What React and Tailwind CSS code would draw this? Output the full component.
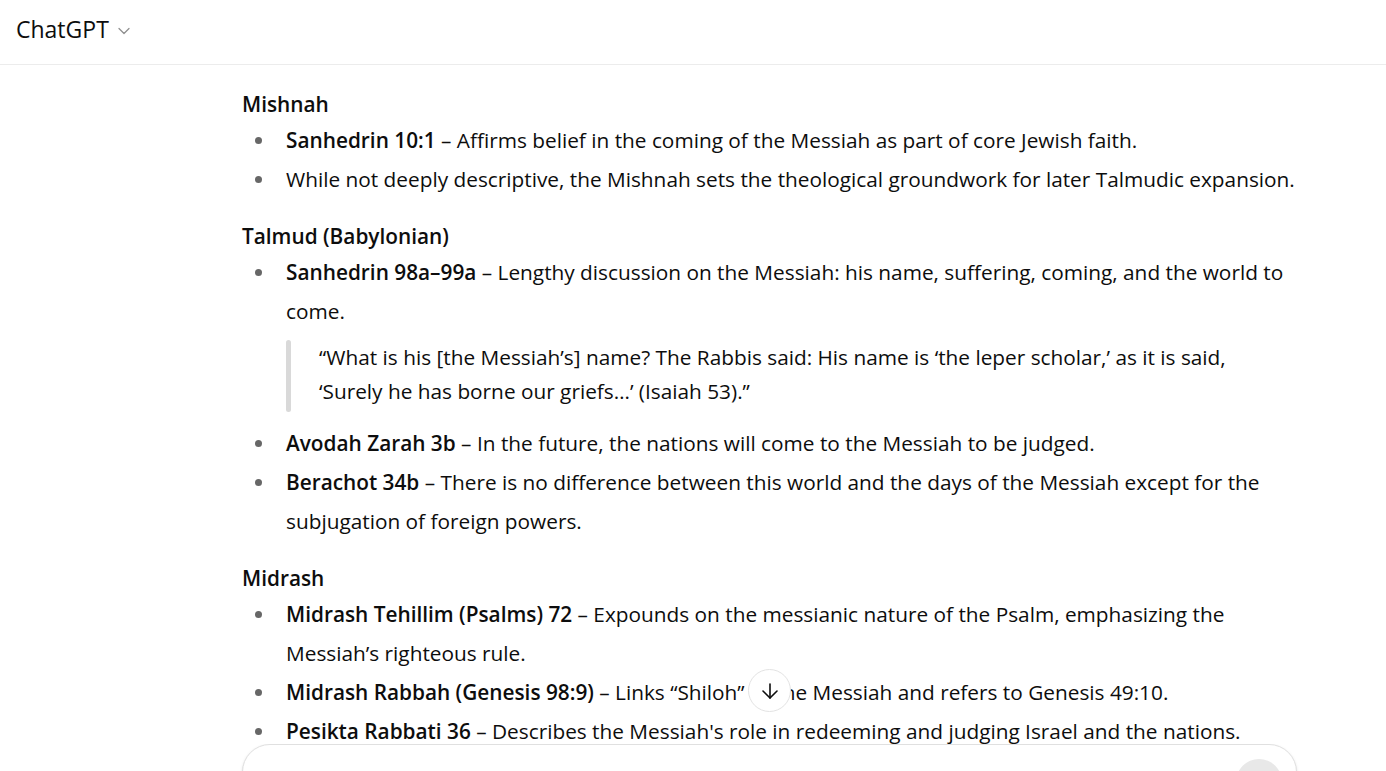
import React from 'react';
import { ChevronDown, ArrowDown } from 'lucide-react';

const sections = [
  {
    title: 'Mishnah',
    items: [
      { term: 'Sanhedrin 10:1', text: ' – Affirms belief in the coming of the Messiah as part of core Jewish faith.' },
      { text: 'While not deeply descriptive, the Mishnah sets the theological groundwork for later Talmudic expansion.' },
    ],
  },
  {
    title: 'Talmud (Babylonian)',
    items: [
      {
        term: 'Sanhedrin 98a–99a',
        text: ' – Lengthy discussion on the Messiah: his name, suffering, coming, and the world to come.',
        quote: [
          '“What is his [the Messiah’s] name? The Rabbis said: His name is ‘the leper scholar,’ as it is said,',
          '‘Surely he has borne our griefs…’ (Isaiah 53).”',
        ],
      },
      { term: 'Avodah Zarah 3b', text: ' – In the future, the nations will come to the Messiah to be judged.' },
      { term: 'Berachot 34b', text: ' – There is no difference between this world and the days of the Messiah except for the subjugation of foreign powers.' },
    ],
  },
  {
    title: 'Midrash',
    items: [
      { term: 'Midrash Tehillim (Psalms) 72', text: ' – Expounds on the messianic nature of the Psalm, emphasizing the Messiah’s righteous rule.' },
      { term: 'Midrash Rabbah (Genesis 98:9)', text: ' – Links “Shiloh” to the Messiah and refers to Genesis 49:10.' },
      { term: 'Pesikta Rabbati 36', text: " – Describes the Messiah's role in redeeming and judging Israel and the nations." },
    ],
  },
];

const Item = ({ item }) => (
  <li className="flex">
    <div className="w-[44px] shrink-0 h-[39px] flex items-center pl-[13px]">
      <span className="w-[7px] h-[7px] rounded-full bg-[#676767]" />
    </div>
    <div className="flex-1 min-w-0">
      <p className="leading-[39px]">
        {item.term && <strong className="font-semibold">{item.term}</strong>}
        {item.text}
      </p>
      {item.quote && (
        <blockquote className="mt-[8.5px] mb-[12px] flex">
          <div className="w-[5px] shrink-0 rounded-full bg-[#d9d9d9]" />
          <div className="pl-[28px] pb-1 leading-[34px]">
            {item.quote[0]}
            <br />
            {item.quote[1]}
          </div>
        </blockquote>
      )}
    </div>
  </li>
);

export default function App() {
  return (
    <div
      className="h-[771px] w-full overflow-hidden flex flex-col bg-white text-[#0d0d0d]"
      style={{ fontFamily: '"Open Sans", "Noto Sans", sans-serif' }}
    >
      <header className="h-[65px] shrink-0 border-b border-[#ececec] flex items-center px-4 pb-[5px] gap-[5px]">
        <span className="text-[23px] text-[#0d0d0d]">ChatGPT</span>
        <ChevronDown size={20} strokeWidth={1.5} className="text-[#8f8f8f] mt-[2px]" />
      </header>

      <main className="relative flex-1 min-h-0 overflow-hidden">
        <div className="ml-[242px] w-[1060px] pt-[23px] text-[20.8px]">
          {sections.map((s, i) => (
            <section key={s.title} className={i > 0 ? 'mt-[21px]' : ''}>
              <h3 className="font-semibold leading-[33px]">{s.title}</h3>
              <ul>
                {s.items.map((it, j) => (
                  <Item key={j} item={it} />
                ))}
              </ul>
            </section>
          ))}
        </div>
        <button className="absolute left-[748px] bottom-[32px] w-[43px] h-[43px] rounded-full bg-white border border-[#e3e3e3] flex items-center justify-center text-[#0d0d0d]">
          <ArrowDown size={24} strokeWidth={1.6} />
        </button>
      </main>

      <div className="h-[27px] shrink-0 overflow-hidden">
        <div className="ml-[242px] w-[1055px] h-[100px] rounded-[28px] border border-[#e0e0e0] bg-white shadow-sm flex justify-end pt-[14px] pr-[14px]">
          <div className="w-[46px] h-[46px] rounded-full bg-[#e8e8e8]" />
        </div>
      </div>
    </div>
  );
}
